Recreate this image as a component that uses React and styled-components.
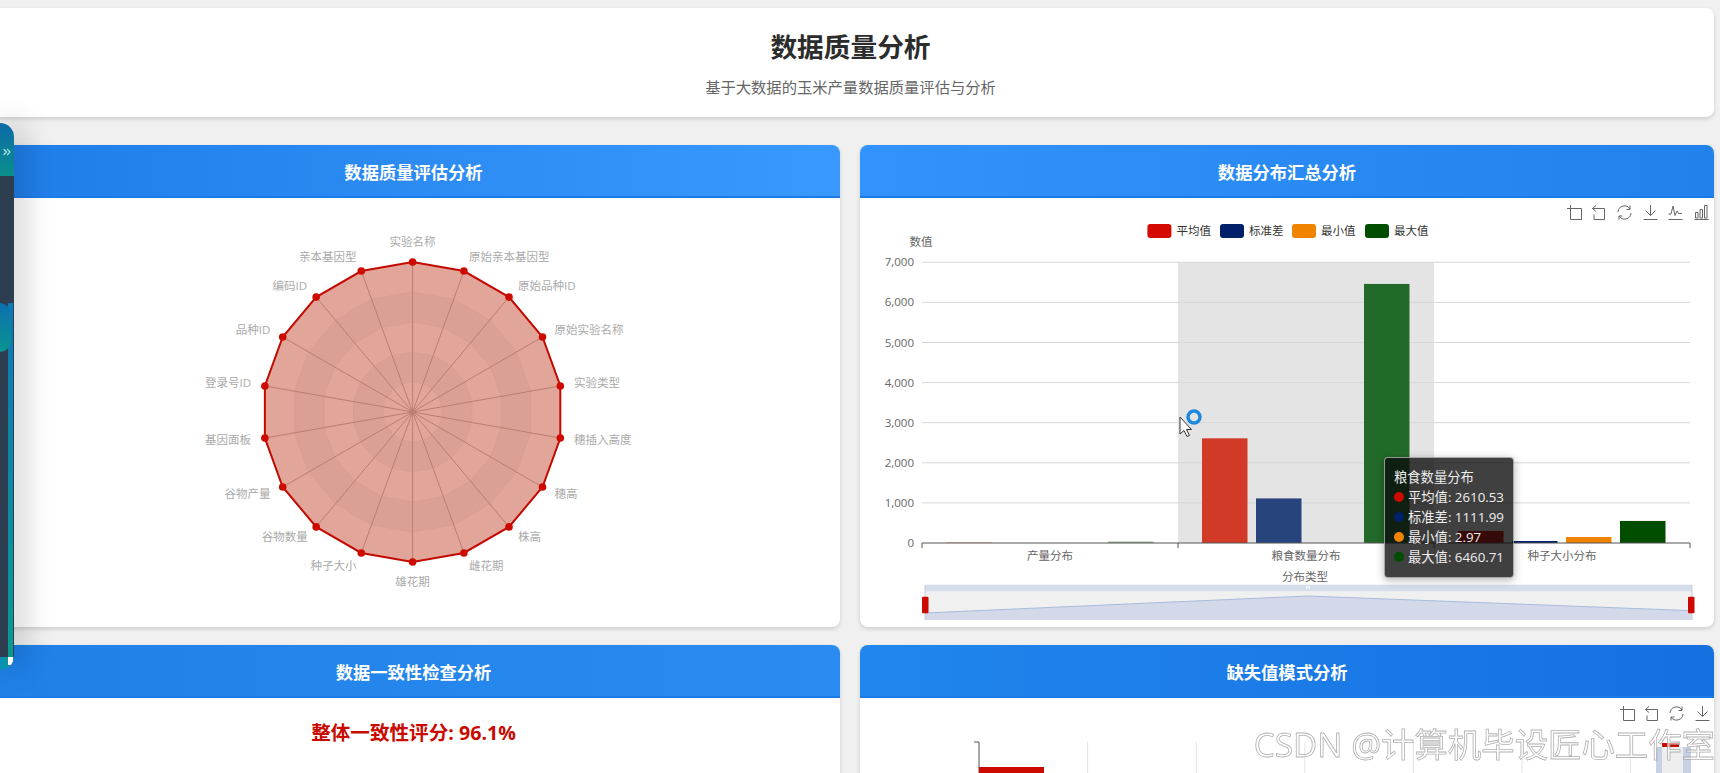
import React from "react";
import styled, { createGlobalStyle } from "styled-components";
import { ChevronsRight } from "lucide-react";

const GlobalStyle = createGlobalStyle`
  html, body {
    margin: 0;
    height: 100%;
    overflow: hidden;
    background: #f0f0f0;
    font-family: "Open Sans", "Noto Sans CJK SC", sans-serif;
  }
`;

const Page = styled.div`
  width: 1727px;
  margin-left: -13px;
  padding-top: 8px;
`;

const HeaderCard = styled.header`
  height: 109px;
  box-sizing: border-box;
  padding-top: 21px;
  background: #fff;
  border-radius: 8px;
  box-shadow: 0 2px 4px rgba(0, 0, 0, 0.15);
  text-align: center;
`;

const Title = styled.h1`
  margin: 0;
  font-size: 26.7px;
  line-height: 36px;
  font-weight: 700;
  color: #2c2c2c;
`;

const Subtitle = styled.p`
  margin: 11px 0 0;
  font-size: 15.3px;
  line-height: 22px;
  color: #666;
`;

const PanelGrid = styled.div`
  display: grid;
  grid-template-columns: 853px 854px;
  gap: 18px 20px;
  margin-top: 28px;
`;

const Panel = styled.section`
  position: relative;
  background: #fff;
  border-radius: 8px;
  overflow: hidden;
  box-shadow: 0 2px 4px rgba(0, 0, 0, 0.15);
`;

const PanelHeader = styled.h2`
  margin: 0;
  height: 53px;
  box-sizing: border-box;
  border-bottom: 2px solid #1c7ae6;
  background: linear-gradient(90deg, ${(p) => p.$from}, ${(p) => p.$to});
  color: #fff;
  font-size: 17.3px;
  font-weight: 700;
  line-height: 56px;
  text-align: center;
`;

const PanelBody = styled.div`
  position: relative;
  height: ${(p) => p.$height}px;
`;

const Chart = styled.svg`
  display: block;
  width: 100%;
  height: 100%;
`;

const ScoreText = styled.div`
  padding-top: 21px;
  font-size: 19.6px;
  line-height: 28px;
  font-weight: 700;
  color: #c80a00;
  text-align: center;
`;

const RadarLabel = styled.text`
  font-size: 11.5px;
  fill: #aaa;
  dominant-baseline: central;
`;

const AxisLabel = styled.text`
  font-size: 11.5px;
  fill: #666;
  dominant-baseline: central;
`;

const LegendLabel = styled.text`
  font-size: 11.5px;
  fill: #333;
  dominant-baseline: central;
`;

const Tooltip = styled.div`
  position: absolute;
  left: 524px;
  top: 259px;
  width: 130px;
  height: 121px;
  box-sizing: border-box;
  padding: 9px 9px;
  background: rgba(10, 10, 10, 0.78);
  border: 1px solid rgba(255, 255, 255, 0.55);
  border-radius: 4px;
  box-shadow: 0 2px 8px rgba(0, 0, 0, 0.3);
  color: #eee;
  font-size: 13.3px;
  line-height: 20px;
  white-space: nowrap;
`;

const TooltipRow = styled.div`
  display: flex;
  align-items: center;
  gap: 4px;
`;

const Dot = styled.span`
  width: 10px;
  height: 10px;
  border-radius: 50%;
  background: ${(p) => p.$color};
`;

const Rail = styled.aside`
  position: fixed;
  left: 0;
  top: 123px;
  width: 14px;
  height: 547px;
  display: flex;
  flex-direction: column;
  border-radius: 0 14px 14px 0;
  overflow: hidden;
  box-shadow: 6px 0 30px rgba(0, 0, 0, 0.3);
`;

const RailHead = styled.div`
  height: 53px;
  flex: none;
  display: flex;
  align-items: flex-end;
  justify-content: flex-end;
  padding: 0 1px 18px 0;
  box-sizing: border-box;
  background: linear-gradient(180deg, #0c6aa6, #0a8f8c);
  color: #a8e6ea;
`;

const RailBody = styled.div`
  flex: 1;
  display: flex;
  justify-content: flex-end;
  padding-right: 1px;
  background: #2c3e50;
`;

const RailStrip = styled.div`
  width: 5px;
  margin-top: 127px;
  background: linear-gradient(180deg, #0c78b8, #0a9a92);
`;

const RailFoot = styled.div`
  position: relative;
  height: 13px;
  flex: none;
  background: linear-gradient(90deg, #0a8fb5, #0a9a92);

  &::after {
    content: "";
    position: absolute;
    left: 8px;
    top: 0;
    width: 5px;
    height: 8px;
    background: #fff;
  }
`;

const RailPill = styled.div`
  position: absolute;
  left: -12px;
  top: 180px;
  width: 23px;
  height: 49px;
  border-radius: 12px;
  background: linear-gradient(180deg, #0c70b0, #0a9490);
`;

const Watermark = styled.div`
  position: fixed;
  right: 5px;
  top: 722px;
  font-size: 33.4px;
  line-height: 44px;
  color: rgba(255, 255, 255, 0.55);
  -webkit-text-stroke: 0.8px rgba(150, 150, 150, 0.75);
  white-space: nowrap;
  pointer-events: none;
`;

const RADAR_LABELS = [
  ["实验名称", 412.6, 241.7, "middle"],
  ["原始亲本基因型", 469, 256.7, "start"],
  ["原始品种ID", 518, 285, "start"],
  ["原始实验名称", 554.6, 329, "start"],
  ["实验类型", 574, 382.7, "start"],
  ["穗插入高度", 574, 439, "start"],
  ["穗高", 554.6, 493, "start"],
  ["株高", 518, 536.7, "start"],
  ["雌花期", 469, 565, "start"],
  ["雄花期", 412.6, 581, "middle"],
  ["种子大小", 356.5, 565, "end"],
  ["谷物数量", 307.7, 536.7, "end"],
  ["谷物产量", 270.4, 493, "end"],
  ["基因面板", 251, 439, "end"],
  ["登录号ID", 251, 382.7, "end"],
  ["品种ID", 270.4, 329, "end"],
  ["编码ID", 307, 285, "end"],
  ["亲本基因型", 356.5, 256.7, "end"],
];

const RADAR_CX = 412.6;
const RADAR_CY = 412;

function radarPoint(i, r) {
  const a = (i * Math.PI * 2) / 18;
  return [RADAR_CX + r * Math.sin(a), RADAR_CY - r * Math.cos(a)];
}

function ringPoints(r) {
  return RADAR_LABELS.map((_, i) => radarPoint(i, r).join(",")).join(" ");
}

function RadarChart() {
  return (
    <Chart viewBox="-13 198 853 429">
      {[150, 120, 90, 60, 30].map((r, i) => (
        <polygon
          key={r}
          points={ringPoints(r)}
          fill={i % 2 === 0 ? "#e2a599" : "#dba095"}
          stroke="#d6998e"
          strokeWidth="0.6"
        />
      ))}
      {RADAR_LABELS.map((_, i) => {
        const [x, y] = radarPoint(i, 150);
        return (
          <line key={i} x1={RADAR_CX} y1={RADAR_CY} x2={x} y2={y} stroke="#b87e72" strokeWidth="1" />
        );
      })}
      <polygon points={ringPoints(150)} fill="none" stroke="#c40a00" strokeWidth="2" />
      {RADAR_LABELS.map((_, i) => {
        const [x, y] = radarPoint(i, 150);
        return <circle key={i} cx={x} cy={y} r="3.8" fill="#cc0a00" />;
      })}
      {RADAR_LABELS.map(([text, x, y, anchor]) => (
        <RadarLabel key={text} x={x} y={y} textAnchor={anchor}>
          {text}
        </RadarLabel>
      ))}
    </Chart>
  );
}

const TOOL_PATHS = {
  crop: "M0 3.5H14.5V15M3.5 0V14.5H15",
  back: "M5 0.5L1.5 3.5L5 6.5M1.5 3.5H13.5V14.5H3V9.5",
  restore:
    "M1 7A6.5 6.5 0 0 1 13 4M13 0.5V4.5H9.5M14 8A6.5 6.5 0 0 1 2 11M2 14.5V11H5.5",
  download: "M7.5 0V10.5M2.5 5.5L7.5 10.5L12.5 5.5M0.5 14.5H14.5",
  line: "M0.5 14.5H14.5M0.5 9H3L5 1L7 10.5L9 6L10.5 8.5H14",
  bar: "M0.5 14.5H14.5M1.5 13V7.5H4V13ZM6 13V4.5H8.5V13ZM10.5 13V0.5H13V13Z",
};

function ToolIcon({ kind, x, y }) {
  return (
    <path
      d={TOOL_PATHS[kind]}
      transform={`translate(${x} ${y})`}
      fill="none"
      stroke="#666"
      strokeWidth="1"
    />
  );
}

const Y_TICKS = [7000, 6000, 5000, 4000, 3000, 2000, 1000, 0];
const yFor = (v) => 543 - v * 0.0401;

const BARS = [
  [946, 20, "#e8a8a0"],
  [1108, 35, "#8ab090"],
  [1202, 2610.53, "#d03a26"],
  [1256, 1111.99, "#27447c"],
  [1364, 6460.71, "#226a2a"],
  [1458, 300, "#cc0a00"],
  [1512, 50, "#00206a"],
  [1566, 150, "#f08300"],
  [1620, 550, "#004d00"],
];

const LEGEND = [
  [1147.4, "平均值", "#d40a00"],
  [1220, "标准差", "#00206a"],
  [1292, "最小值", "#f08300"],
  [1365, "最大值", "#004d00"],
];

const CATEGORIES = [
  [1050, "产量分布"],
  [1306, "粮食数量分布"],
  [1562, "种子大小分布"],
];

const TOOLTIP_ROWS = [
  ["平均值", "2610.53", "#cc0a00"],
  ["标准差", "1111.99", "#00206a"],
  ["最小值", "2.97", "#f08300"],
  ["最大值", "6460.71", "#004d00"],
];

function BarChart() {
  return (
    <Chart viewBox="860 198 854 429">
      {["crop", "back", "restore", "download", "line", "bar"].map((kind, i) => (
        <ToolIcon key={kind} kind={kind} x={[1567, 1591, 1617, 1643, 1668, 1694][i]} y={205} />
      ))}
      {LEGEND.map(([x, label, color]) => (
        <g key={label}>
          <rect x={x} y={224} width="24" height="14" rx="3" fill={color} />
          <LegendLabel x={x + 29} y={230.5}>
            {label}
          </LegendLabel>
        </g>
      ))}
      <AxisLabel x={921} y={241.7} textAnchor="middle">
        数值
      </AxisLabel>
      <rect x={1178} y={262} width={256} height={281} fill="#e4e4e4" />
      {Y_TICKS.map((v) => (
        <g key={v}>
          {v > 0 && <line x1={922} x2={1690} y1={yFor(v)} y2={yFor(v)} stroke="#d8d8dc" />}
          <AxisLabel x={914} y={yFor(v) - 0.5} textAnchor="end">
            {v.toLocaleString("en-US")}
          </AxisLabel>
        </g>
      ))}
      {BARS.map(([x, v, color]) => (
        <rect key={x} x={x} y={yFor(v)} width="45.5" height={543 - yFor(v)} fill={color} />
      ))}
      <path d="M922 548V543H1690V548M1178 543V548M1434 543V548" fill="none" stroke="#555" />
      {CATEGORIES.map(([x, label]) => (
        <AxisLabel key={label} x={x} y={555.7} textAnchor="middle">
          {label}
        </AxisLabel>
      ))}
      <AxisLabel x={1305} y={576.7} textAnchor="middle">
        分布类型
      </AxisLabel>
      <rect x={925} y={591} width={767} height={29} fill="#f0f0f0" />
      <path d="M925 613L1308 596L1692 610.7V620H925Z" fill="#d3d9e8" />
      <path d="M925 613L1308 596L1692 610.7" fill="none" stroke="#a9bbdc" />
      <rect x={925} y={584.7} width={767} height={6.5} fill="#d5dcea" />
      <path d="M925 585V620M1692 585V620" stroke="#c5cddc" />
      <path d="M1306.5 586V589M1308 586V589M1309.5 586V589" stroke="#f4f6fa" />
      <rect x={922} y={596.7} width={6.5} height={16.6} rx="1" fill="#cc0a00" />
      <rect x={1688} y={596.7} width={6.5} height={16.6} rx="1" fill="#cc0a00" />
      <circle cx={1194} cy={417} r={6} fill="none" stroke="#1e88e0" strokeWidth="3.4" />
      <path
        d="M1180 417V434L1184 430.5L1187 436.5L1189.5 435.5L1186.5 429.5H1191.5Z"
        fill="#fff"
        stroke="#333"
        strokeWidth="1"
      />
    </Chart>
  );
}

function MissingChart() {
  return (
    <Chart viewBox="860 698 854 300">
      {[0, 1, 2, 3, 4, 5].map((i) => (
        <line
          key={i}
          x1={1087.6 + i * 108.6}
          x2={1087.6 + i * 108.6}
          y1={742}
          y2={900}
          stroke="#e4e4e4"
        />
      ))}
      {["crop", "back", "restore", "download"].map((kind, i) => (
        <ToolIcon key={kind} kind={kind} x={[1620, 1644, 1669, 1695][i]} y={706} />
      ))}
      <path d="M974 742H979V900" fill="none" stroke="#555" />
      <rect x={979} y={767} width={65} height={40} fill="#cc0a00" />
      <rect x={1656} y={747} width={35} height={80} fill="#c8d0e4" />
      <rect x={1662} y={747} width={21} height={80} fill="#eeeeee" />
      <rect x={1662} y={743} width={17} height={4} fill="#cc0a00" />
      <rect x={1667.5} y={743} width={1} height={4} fill="#f4d0d0" />
    </Chart>
  );
}

export default function App() {
  return (
    <>
      <GlobalStyle />
      <Page>
        <HeaderCard>
          <Title>数据质量分析</Title>
          <Subtitle>基于大数据的玉米产量数据质量评估与分析</Subtitle>
        </HeaderCard>
        <PanelGrid>
          <Panel>
            <PanelHeader $from="#1f7de8" $to="#3a99ff">
              数据质量评估分析
            </PanelHeader>
            <PanelBody $height={429}>
              <RadarChart />
            </PanelBody>
          </Panel>
          <Panel>
            <PanelHeader $from="#3193fb" $to="#2082ea">
              数据分布汇总分析
            </PanelHeader>
            <PanelBody $height={429}>
              <BarChart />
              <Tooltip>
                <div>粮食数量分布</div>
                {TOOLTIP_ROWS.map(([label, value, color]) => (
                  <TooltipRow key={label}>
                    <Dot $color={color} />
                    {label}: {value}
                  </TooltipRow>
                ))}
              </Tooltip>
            </PanelBody>
          </Panel>
          <Panel>
            <PanelHeader $from="#1f80e8" $to="#2a8bf0">
              数据一致性检查分析
            </PanelHeader>
            <PanelBody $height={300}>
              <ScoreText>整体一致性评分: 96.1%</ScoreText>
            </PanelBody>
          </Panel>
          <Panel>
            <PanelHeader $from="#2186ee" $to="#1570e0">
              缺失值模式分析
            </PanelHeader>
            <PanelBody $height={300}>
              <MissingChart />
            </PanelBody>
          </Panel>
        </PanelGrid>
      </Page>
      <Rail>
        <RailHead>
          <ChevronsRight size={12} strokeWidth={2.5} />
        </RailHead>
        <RailBody>
          <RailStrip />
        </RailBody>
        <RailFoot />
        <RailPill />
      </Rail>
      <Watermark>CSDN @计算机毕设匠心工作室</Watermark>
    </>
  );
}
